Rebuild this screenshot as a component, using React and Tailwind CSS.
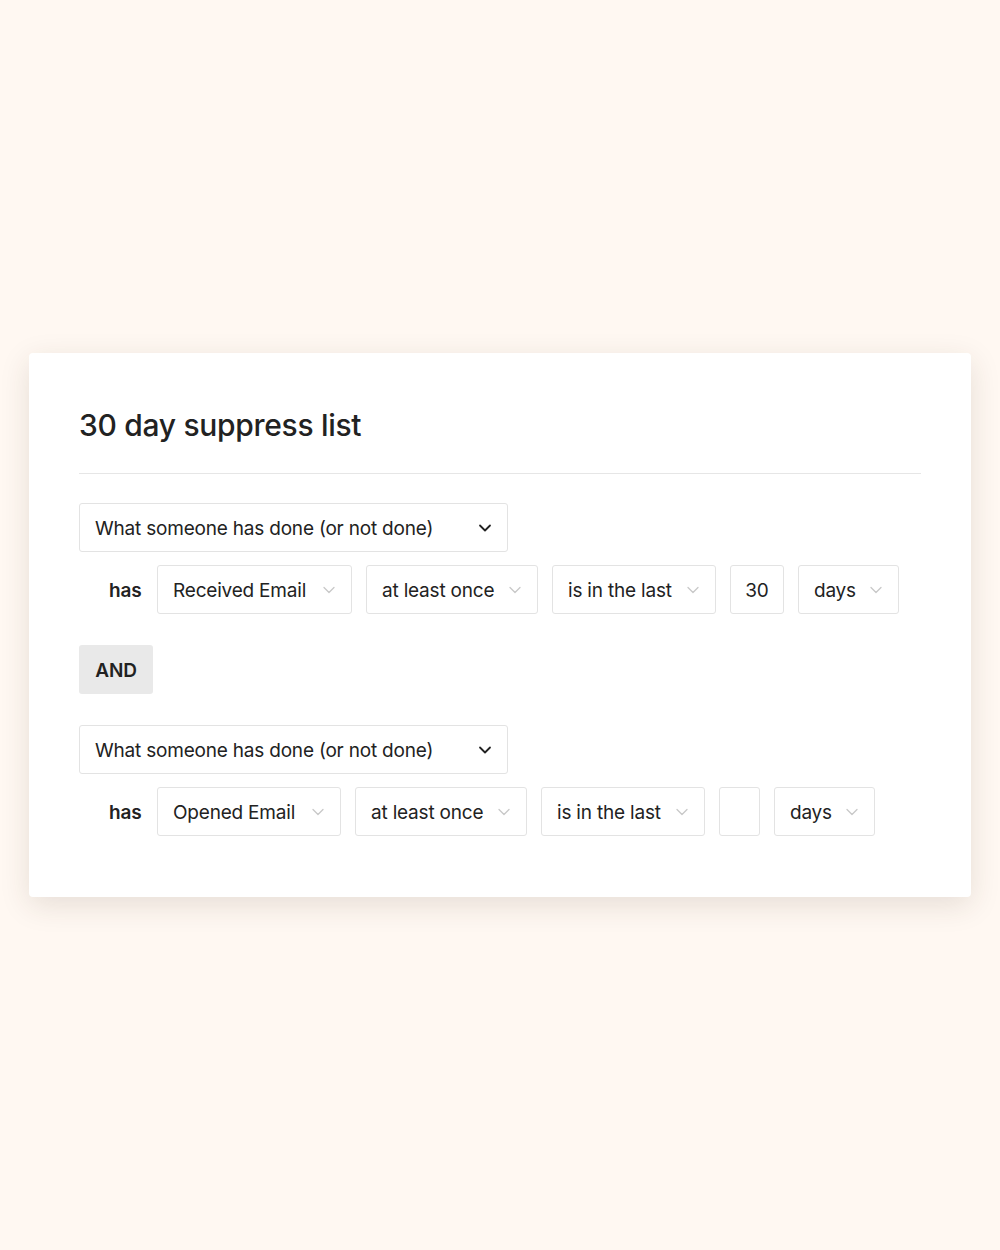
import React from 'react'

function Chevron({ dark }) {
  return (
    <svg
      className={dark ? 'h-[16px] w-[16px] text-[#222]' : 'h-[16px] w-[16px] text-[#c8c8c8]'}
      viewBox="0 0 16 16"
      fill="none"
      stroke="currentColor"
      strokeWidth={dark ? 1.8 : 1.3}
      strokeLinecap="round"
      strokeLinejoin="round"
    >
      <path d="M3 5.5l5 5 5-5" />
    </svg>
  )
}

function Pill({ label, width }) {
  return (
    <div
      className={`flex h-[49px] items-center justify-between rounded-[3px] border border-[#e3e3e3] bg-white pl-[15px] pr-[14px] ${width}`}
    >
      <span className="pt-[4px]">{label}</span>
      <Chevron />
    </div>
  )
}

function Condition({ event, lead, value, width }) {
  return (
    <div>
      <div className="flex h-[49px] w-[429px] items-center justify-between rounded-[3px] border border-[#e3e3e3] bg-white pl-[15px] pr-[14px]">
        <span className="pt-[4px]">What someone has done (or not done)</span>
        <Chevron dark />
      </div>
      <div className="mt-[13px] flex items-center gap-[14px] pl-[30px]">
        <span className="w-[34px] pt-[4px] font-semibold">has</span>
        <Pill label={event} width={width} />
        <Pill label="at least once" width="w-[172px]" />
        <Pill label="is in the last" width="w-[164px]" />
        <div
          className={`flex h-[49px] items-center justify-center rounded-[3px] border border-[#e3e3e3] bg-white pt-[4px] ${lead}`}
        >
          {value}
        </div>
        <Pill label="days" width="w-[101px]" />
      </div>
    </div>
  )
}

export default function App() {
  return (
    <div className="flex min-h-[1250px] items-center justify-center bg-[#fff8f2] font-['Inter',sans-serif] text-[19px] tracking-[-0.2px] text-[#222]">
      <div className="h-[544px] w-[942px] rounded-[4px] bg-white px-[50px] pt-[50px] shadow-[0_8px_30px_rgba(60,50,30,0.13)]">
        <h1 className="text-[30px] font-medium leading-[44px] tracking-[-0.3px]">30 day suppress list</h1>
        <div className="mt-[26px] h-px bg-[#e6e6e6]" />
        <div className="mt-[29px]">
          <Condition event="Received Email" lead="w-[54px]" value="30" width="w-[195px]" />
          <div className="my-[31px] flex h-[49px] w-[74px] items-center justify-center rounded-[3px] bg-[#e9e9e9] pt-[4px] font-semibold">
            AND
          </div>
          <Condition event="Opened Email" lead="w-[41px]" value="" width="w-[184px]" />
        </div>
      </div>
    </div>
  )
}
